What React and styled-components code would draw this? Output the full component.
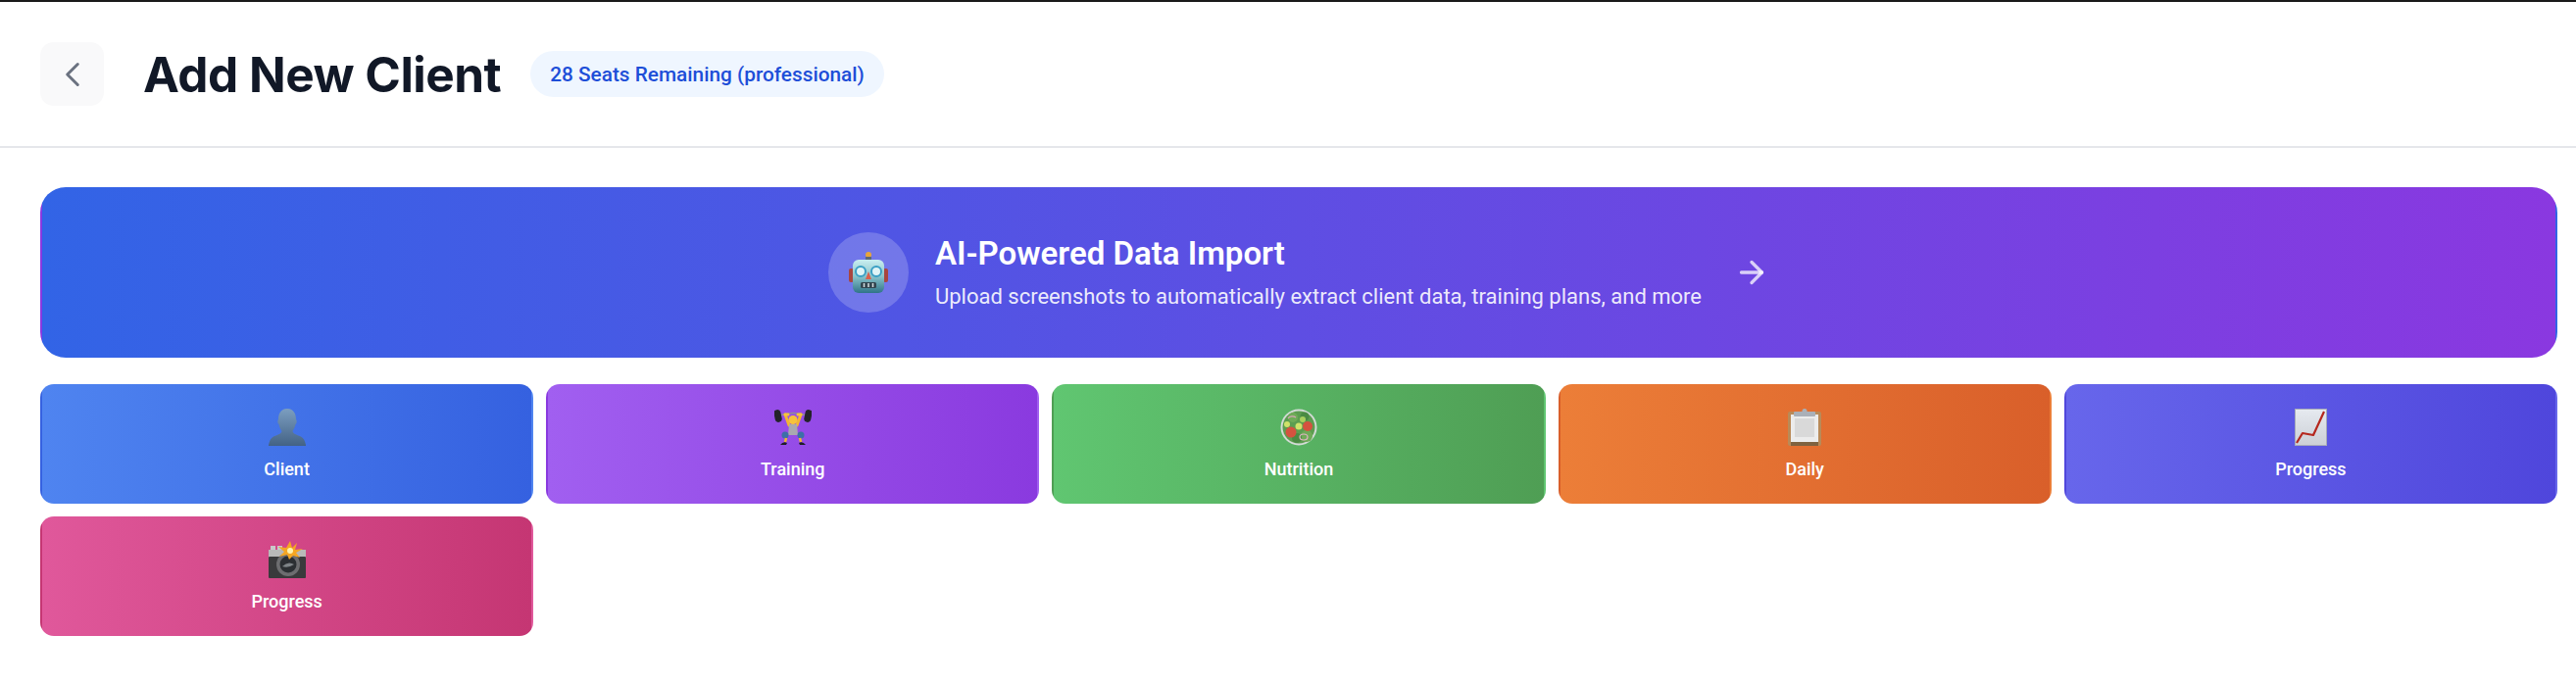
import React from 'react';
import styled, { createGlobalStyle } from 'styled-components';
import { ChevronLeft, ArrowRight } from 'lucide-react';

const GlobalStyle = createGlobalStyle`
    html, body {
        margin: 0;
        padding: 0;
        background: #fff;
    }
    body {
        font-family: Roboto, "Liberation Sans", sans-serif;
    }
`;

const Page = styled.div`
    width: 100%;
    min-height: 698px;
    border-top: 2px solid #1a1a1a;
    box-sizing: border-box;
`;

const Header = styled.header`
    height: 149px;
    box-sizing: border-box;
    display: flex;
    align-items: center;
    padding: 0 41px;
    border-bottom: 2px solid #e5e7eb;
`;

const BackButton = styled.button`
    width: 65px;
    height: 65px;
    margin-right: 40px;
    border: none;
    border-radius: 14px;
    background: #f9f9fa;
    color: #6b7280;
    display: flex;
    align-items: center;
    justify-content: center;
    padding: 0;
`;

const Title = styled.h1`
    margin: 0 30px 0 0;
    font-family: Inter, sans-serif;
    font-size: 49.5px;
    font-weight: 700;
    letter-spacing: -0.5px;
    color: #111827;
`;

const SeatBadge = styled.span`
    height: 47px;
    display: flex;
    align-items: center;
    padding: 0 20px;
    border-radius: 24px;
    background: #eff6ff;
    color: #1d4ed8;
    font-size: 20.8px;
    font-weight: 500;
`;

const Content = styled.main`
    padding: 40px 19px 0 41px;
    display: flex;
    flex-direction: column;
    gap: 27px;
`;

const Banner = styled.div`
    height: 174px;
    box-sizing: border-box;
    border: 2px solid transparent;
    border-radius: 26px;
    background: linear-gradient(90deg, #3264e6, #8a38e0);
    display: flex;
    align-items: center;
    justify-content: center;
    gap: 27px;
    color: #fff;
`;

const RobotCircle = styled.div`
    width: 82px;
    height: 82px;
    border-radius: 50%;
    background: rgba(255, 255, 255, 0.2);
    display: flex;
    align-items: center;
    justify-content: center;
`;

const BannerText = styled.div`
    display: flex;
    flex-direction: column;
    gap: 13px;
    margin-right: 6px;
`;

const BannerTitle = styled.h2`
    margin: 0;
    font-size: 33px;
    font-weight: 600;
    line-height: 36px;
`;

const BannerSub = styled.p`
    margin: 0;
    font-size: 22px;
    line-height: 26px;
    color: rgba(255, 255, 255, 0.9);
`;

const ArrowIcon = styled(ArrowRight)`
    color: rgba(255, 255, 255, 0.75);
`;

const CardGrid = styled.div`
    display: grid;
    grid-template-columns: repeat(5, 1fr);
    gap: 13px;
`;

const Card = styled.div`
    height: 122px;
    box-sizing: border-box;
    border: 2px solid transparent;
    border-radius: 14px;
    background: linear-gradient(90deg, ${props => props.$from}, ${props => props.$to});
    display: flex;
    flex-direction: column;
    align-items: center;
    justify-content: center;
    gap: 13px;
    color: #fff;
`;

const CardLabel = styled.span`
    font-size: 18px;
    font-weight: 500;
    line-height: 22px;
`;

function RobotEmoji() {
    return (
        <svg width="42" height="44" viewBox="0 0 42 44">
            <defs>
                <linearGradient id="robotHead" x1="0" y1="0" x2="0" y2="1">
                    <stop offset="0" stopColor="#c9eef0" />
                    <stop offset="0.5" stopColor="#8ac4cb" />
                    <stop offset="1" stopColor="#2f7488" />
                </linearGradient>
            </defs>
            <circle cx="21" cy="4" r="3" fill="#e8a53a" />
            <rect x="18" y="6" width="6" height="5" fill="#5d6a78" />
            <rect x="1" y="18" width="5" height="14" rx="2" fill="#a8453f" />
            <rect x="36" y="18" width="5" height="14" rx="2" fill="#a8453f" />
            <rect x="5" y="9" width="32" height="34" rx="6" fill="url(#robotHead)" />
            <circle cx="13" cy="21" r="5" fill="#dff4f6" stroke="#3a9fc4" strokeWidth="2" />
            <circle cx="29" cy="21" r="5" fill="#dff4f6" stroke="#3a9fc4" strokeWidth="2" />
            <path d="M21 21 L24 29 H18 Z" fill="#d9604c" />
            <rect x="13" y="32" width="16" height="6" rx="1.5" fill="#33454f" />
            <path d="M16.500 33v4M21 33v4M25.500 33v4" stroke="#d4dde0" strokeWidth="1.500" />
        </svg>
    );
}

function BustEmoji() {
    return (
        <svg width="38" height="38" viewBox="0 0 38 38">
            <defs>
                <linearGradient id="bust" x1="0" y1="0" x2="0" y2="1">
                    <stop offset="0" stopColor="#7c9ec0" />
                    <stop offset="1" stopColor="#436285" />
                </linearGradient>
            </defs>
            <path
                d="M19 0 C26 0 28 6 28 11 C29 12 29 15 27.500 16 C27 19 25.500 21 24.500 23 C25 26 30 27 33 28.500 C36 30 37 33 38 37 V38 H0 V37 C1 33 2 30 5 28.500 C8 27 13 26 13.500 23 C12.500 21 11 19 10.500 16 C9 15 9 12 10 11 C10 6 12 0 19 0 Z"
                fill="url(#bust)"
            />
        </svg>
    );
}

function LifterEmoji() {
    return (
        <svg width="38" height="38" viewBox="0 0 38 38">
            <path d="M5 7 Q19 2 33 7" stroke="#8f8f98" strokeWidth="1.500" fill="none" />
            <rect x="0" y="1" width="7" height="13" rx="3.500" transform="rotate(-12 3.500 7)" fill="#23232a" />
            <rect x="31" y="1" width="7" height="13" rx="3.500" transform="rotate(12 34.500 7)" fill="#23232a" />
            <path d="M11 6 L15 17 M27 6 L23 17" stroke="#f2b632" strokeWidth="3" strokeLinecap="round" />
            <circle cx="19" cy="11.500" r="4.500" fill="#f6c33c" />
            <path d="M15 16 H23 L24 27 H14 Z" fill="#a9a9b0" />
            <path d="M11 6 h3 M24 6 h3" stroke="#f6c33c" strokeWidth="3" strokeLinecap="round" />
            <circle cx="11" cy="27" r="3.500" fill="#3d6fa8" />
            <circle cx="27" cy="27" r="3.500" fill="#3d6fa8" />
            <path d="M12 30 L11 34 M26 30 L27 34" stroke="#f2b632" strokeWidth="2.500" />
            <path d="M6 37 Q9 33 13 35 L12 37 Z M32 37 Q29 33 25 35 L26 37 Z" fill="#1f1f28" />
        </svg>
    );
}

function SaladEmoji() {
    return (
        <svg width="38" height="38" viewBox="0 0 38 38">
            <circle cx="19" cy="19" r="18.500" fill="#d3dbd6" />
            <circle cx="19" cy="19" r="16.500" fill="#5c9d50" />
            <circle cx="13" cy="9" r="5" fill="#6fab58" />
            <circle cx="25" cy="8" r="4.500" fill="#4a8a43" />
            <circle cx="27" cy="28" r="6" fill="#6fab58" />
            <circle cx="17" cy="30" r="5" fill="#4a8a43" />
            <circle cx="7" cy="16" r="3" fill="#cfe26a" />
            <circle cx="19" cy="18" r="3.500" fill="#cfe26a" />
            <circle cx="23" cy="11" r="3" fill="#a9cf5e" />
            <circle cx="11" cy="24" r="5.500" fill="#d4523f" />
            <circle cx="28" cy="18" r="5" fill="#d4523f" />
            <path d="M8 10 A5 4 0 0 1 16 9" stroke="#d9a6b8" strokeWidth="1.200" fill="none" />
            <ellipse cx="24" cy="29" rx="4" ry="3" stroke="#e0b4c4" strokeWidth="1.200" fill="none" />
        </svg>
    );
}

function ClipboardEmoji() {
    return (
        <svg width="34" height="38" viewBox="0 0 34 38">
            <rect x="0" y="3" width="34" height="35" rx="2" fill="#b98a58" />
            <rect x="3" y="6" width="28" height="28" fill="#ececec" />
            <rect x="7" y="10" width="20" height="19" fill="#d9d9d9" />
            <rect x="3" y="34" width="28" height="4" fill="#7f6240" />
            <rect x="6" y="3" width="22" height="5" rx="1" fill="#aab0b8" />
            <circle cx="17" cy="2.500" r="2.500" fill="#aab0b8" />
        </svg>
    );
}

function ChartEmoji() {
    return (
        <svg width="33" height="38" viewBox="0 0 33 38">
            <defs>
                <linearGradient id="chartBg" x1="0" y1="0" x2="0" y2="1">
                    <stop offset="0" stopColor="#e6eaf0" />
                    <stop offset="1" stopColor="#ccd0d6" />
                </linearGradient>
            </defs>
            <rect x="0.500" y="0.500" width="32" height="37" fill="url(#chartBg)" stroke="#a7abb8" />
            <path d="M2 35 L8 25 L19 27 L30 3" stroke="#b5281e" strokeWidth="2.200" fill="none" strokeLinejoin="round" />
        </svg>
    );
}

function CameraEmoji() {
    return (
        <svg width="38" height="38" viewBox="0 0 38 38">
            <rect x="2" y="5" width="5" height="5" fill="#c9c9c9" />
            <rect x="9" y="5" width="5" height="5" fill="#c9c9c9" />
            <rect x="0" y="9" width="38" height="9" fill="#b9b9b9" />
            <rect x="0" y="16" width="38" height="22" rx="1" fill="#3a3a3c" />
            <circle cx="20" cy="24" r="12" fill="#6d6d70" />
            <circle cx="20" cy="24" r="8.500" fill="#2c2f33" />
            <path d="M14 26 Q20 20 26 24 Q20 28 14 26 Z" fill="#7f8488" />
            <path
                d="M22 0 L24 7 L29 2 L27 9 L35 8 L28 12 L32 17 L25 15 L21 19 L19 14 L11 16 L16 11 L10 6 L18 7 Z"
                fill="#f5a623"
            />
            <circle cx="22" cy="10" r="3" fill="#fff3b0" />
        </svg>
    );
}

const cards = [
    { label: 'Client', from: '#4f84f0', to: '#3561e0', icon: <BustEmoji /> },
    { label: 'Training', from: '#a15ff0', to: '#8a3adf', icon: <LifterEmoji /> },
    { label: 'Nutrition', from: '#60c671', to: '#4f9e54', icon: <SaladEmoji /> },
    { label: 'Daily', from: '#ec7e38', to: '#d95f2a', icon: <ClipboardEmoji /> },
    { label: 'Progress', from: '#6766eb', to: '#4f46dc', icon: <ChartEmoji /> },
    { label: 'Progress', from: '#e0589b', to: '#c53673', icon: <CameraEmoji /> },
];

export default function App() {
    return (
        <>
            <GlobalStyle />
            <Page>
                <Header>
                    <BackButton aria-label="Back">
                        <ChevronLeft size={42} strokeWidth={1.75} />
                    </BackButton>
                    <Title>Add New Client</Title>
                    <SeatBadge>28 Seats Remaining (professional)</SeatBadge>
                </Header>
                <Content>
                    <Banner>
                        <RobotCircle>
                            <RobotEmoji />
                        </RobotCircle>
                        <BannerText>
                            <BannerTitle>AI-Powered Data Import</BannerTitle>
                            <BannerSub>Upload screenshots to automatically extract client data, training plans, and more</BannerSub>
                        </BannerText>
                        <ArrowIcon size={36} strokeWidth={2.2} />
                    </Banner>
                    <CardGrid>
                        {cards.map((card, i) => (
                            <Card key={i} $from={card.from} $to={card.to}>
                                {card.icon}
                                <CardLabel>{card.label}</CardLabel>
                            </Card>
                        ))}
                    </CardGrid>
                </Content>
            </Page>
        </>
    );
}
